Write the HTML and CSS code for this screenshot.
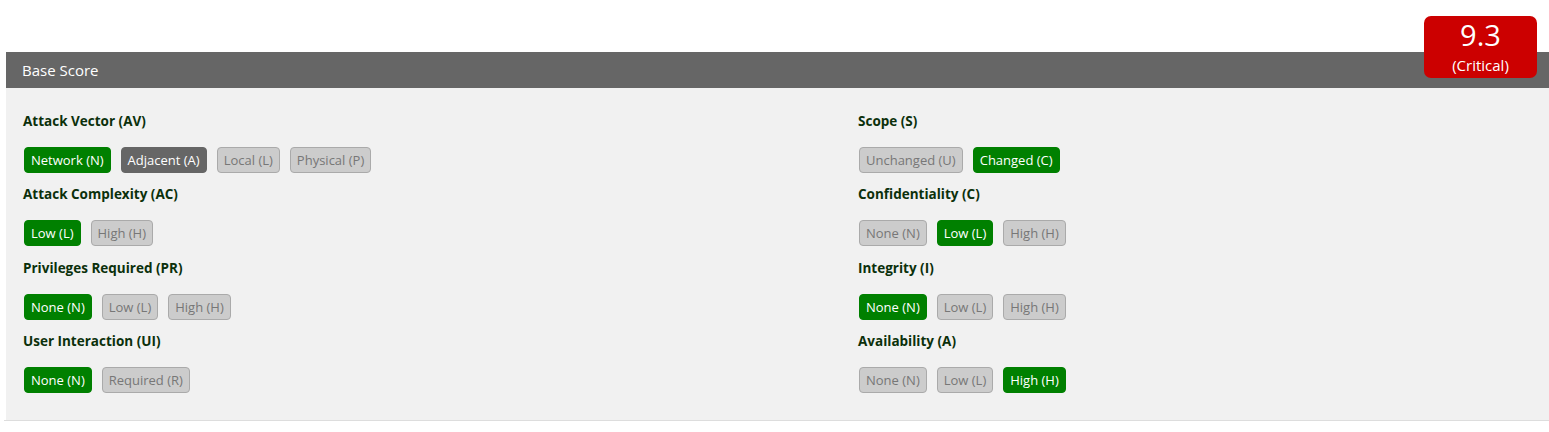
FILE: index.html
```html
<!DOCTYPE html>
<html>
<head>
<meta charset="utf-8">
<link rel="stylesheet" href="styles.css">
</head>
<body>
<div class="page">
  <div class="score-badge">
    <div class="score-num">9.3</div>
    <div class="score-sev">(Critical)</div>
  </div>
  <div class="panel">
    <div class="panel-head"><span class="panel-title">Base Score</span></div>
    <div class="panel-body">
      <div class="col">
        <div class="metric">
          <div class="metric-title">Attack Vector (AV)</div>
          <div class="btns">
            <span class="btn on">Network (N)</span>
            <span class="btn dark">Adjacent (A)</span>
            <span class="btn">Local (L)</span>
            <span class="btn">Physical (P)</span>
          </div>
        </div>
        <div class="metric">
          <div class="metric-title">Attack Complexity (AC)</div>
          <div class="btns">
            <span class="btn on">Low (L)</span>
            <span class="btn">High (H)</span>
          </div>
        </div>
        <div class="metric">
          <div class="metric-title">Privileges Required (PR)</div>
          <div class="btns">
            <span class="btn on">None (N)</span>
            <span class="btn">Low (L)</span>
            <span class="btn">High (H)</span>
          </div>
        </div>
        <div class="metric">
          <div class="metric-title">User Interaction (UI)</div>
          <div class="btns">
            <span class="btn on">None (N)</span>
            <span class="btn">Required (R)</span>
          </div>
        </div>
      </div>
      <div class="col">
        <div class="metric">
          <div class="metric-title">Scope (S)</div>
          <div class="btns">
            <span class="btn">Unchanged (U)</span>
            <span class="btn on">Changed (C)</span>
          </div>
        </div>
        <div class="metric">
          <div class="metric-title">Confidentiality (C)</div>
          <div class="btns">
            <span class="btn">None (N)</span>
            <span class="btn on">Low (L)</span>
            <span class="btn">High (H)</span>
          </div>
        </div>
        <div class="metric">
          <div class="metric-title">Integrity (I)</div>
          <div class="btns">
            <span class="btn on">None (N)</span>
            <span class="btn">Low (L)</span>
            <span class="btn">High (H)</span>
          </div>
        </div>
        <div class="metric">
          <div class="metric-title">Availability (A)</div>
          <div class="btns">
            <span class="btn">None (N)</span>
            <span class="btn">Low (L)</span>
            <span class="btn on">High (H)</span>
          </div>
        </div>
      </div>
    </div>
  </div>
  <div class="rule"></div>
</div>
</body>
</html>
```
FILE: styles.css
```css
* { box-sizing: border-box; }
html, body { margin: 0; padding: 0; background: #fff; }
body { font-family: "Open Sans", "Noto Sans", sans-serif; }
.page {
  position: relative;
  padding-top: 52px;
}
.score-badge {
  position: absolute;
  left: 1424px;
  top: 16px;
  width: 113px;
  height: 62px;
  background: #cc0000;
  border-radius: 7px;
  color: #fff;
  text-align: center;
  z-index: 2;
  padding-top: 3px;
}
.score-num {
  font-size: 29px;
  line-height: 32px;
  height: 32px;
}
.score-sev {
  font-size: 15px;
  line-height: 20px;
  height: 20px;
  margin-top: 4.2px;
}
.panel {
  margin-left: 6px;
  background: #f1f1f1;
}
.panel-head {
  display: flex;
  align-items: center;
  height: 36px;
  background: #666;
  color: #fff;
  font-size: 15px;
  padding-left: 16px;
}
.panel-title {
  line-height: 20px;
}
.panel-body {
  display: grid;
  grid-template-columns: 835px 1fr;
  padding: 23px 17px 27px 17px;
}
.col {
  display: flex;
  flex-direction: column;
  align-items: flex-start;
}
.metric { margin-bottom: 11.33px; }
.metric:last-child { margin-bottom: 0; }
.metric-title {
  font-size: 13.5px;
  font-weight: 700;
  color: #0b300b;
  line-height: 20px;
  height: 20px;
}
.btns {
  display: flex;
  gap: 10px;
  margin-top: 16px;
  padding-left: 1px;
}
.btn {
  display: inline-flex;
  align-items: center;
  height: 26px;
  padding: 0 6px;
  font-size: 13px;
  color: #777;
  background: #ccc;
  border: 1px solid #aaa;
  border-radius: 4px;
}
.btn.on {
  background: #008000;
  border-color: #008000;
  color: #fff;
}
.btn.dark {
  background: #666;
  border-color: #666;
  color: #fff;
}
.rule {
  margin-left: 4px;
  height: 2px;
  border-top: 1px solid #ddd;
}
```
